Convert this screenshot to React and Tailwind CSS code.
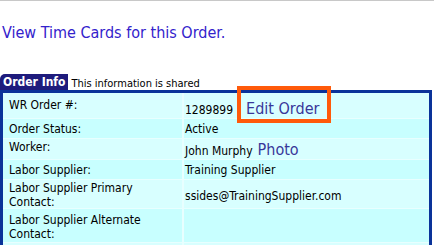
const rows = [
  {
    label: "WR Order #:",
    h: "h-[25px]",
    lpt: "pt-[5px]",
    vpt: "pt-[6px]",
    bg: "bg-[#d8ffff]",
    value: (
      <div className="flex items-baseline">
        <span>1289899</span>
        <a className="ml-[13px] text-[16px] leading-[19px] text-[#38379a]">Edit Order</a>
      </div>
    ),
  },
  { label: "Order Status:", h: "h-[19px]", lpt: "pt-[3px]", vpt: "pt-[3px]", bg: "bg-[#c8ffff]", value: "Active" },
  {
    label: "Worker:",
    h: "h-[20px]",
    lpt: "pt-[1px]",
    vpt: "pt-[1px]",
    bg: "bg-[#d8ffff]",
    value: (
      <div className="flex items-baseline">
        <span>John Murphy</span>
        <a className="ml-[5px] text-[16px] leading-[19px] text-[#38379a]">Photo</a>
      </div>
    ),
  },
  { label: "Labor Supplier:", h: "h-[19px]", lpt: "pt-[3px]", vpt: "pt-[3px]", bg: "bg-[#c8ffff]", value: "Training Supplier" },
  {
    label: "Labor Supplier Primary Contact:",
    h: "h-[28px]",
    lpt: "pt-[1px]",
    vpt: "pt-[9px]",
    bg: "bg-[#d8ffff]",
    value: "ssides@TrainingSupplier.com",
  },
  {
    label: "Labor Supplier Alternate Contact:",
    h: "h-[33px]",
    lpt: "pt-[4px]",
    vpt: "pt-[4px]",
    bg: "bg-[#c8ffff]",
    value: "",
  },
  { label: "", h: "h-[20px]", lpt: "pt-[3px]", vpt: "pt-[3px]", bg: "bg-[#d8ffff]", value: "" },
];

export default function App() {
  return (
    <div className="relative h-[245px] w-[434px] overflow-hidden bg-white font-['DejaVu_Sans_Condensed','DejaVu_Sans',sans-serif] text-black">
      <div className="h-px bg-[#c8c8c8]" />
      <div className="pl-[2px] pt-[20px]">
        <a className="text-[16px] leading-[19px] text-[#3322cc]">View Time Cards for this Order.</a>
      </div>

      <div className="mt-[29px] flex items-end">
        <div className="h-[16px] rounded-tl-[5px] bg-[#1e1b7c] px-[3px] text-[12px] font-bold leading-[16px] text-white">
          Order Info
        </div>
        <span className="ml-[3px] text-[11px] leading-[13px]">This information is shared</span>
      </div>

      <div className="w-[432px] border-x-[3px] border-t-[3px] border-[#0a3399] bg-[#e8ffff]">
        <div className="grid grid-cols-[179px_1fr] gap-x-[2px] gap-y-[1px] text-[12px] leading-[14px]">
          {rows.map((r, i) => (
            <div key={i} className="contents">
              <div className={`${r.h} ${r.lpt} ${r.bg} pl-[6px] pr-2`}>{r.label}</div>
              <div className={`${r.h} ${r.vpt} ${r.bg} pl-[1px]`}>{r.value}</div>
            </div>
          ))}
        </div>
      </div>

      <div className="pointer-events-none absolute left-[237px] top-[86px] h-[37px] w-[94px] border-[4px] border-[#ff5a0a]" />
    </div>
  );
}
